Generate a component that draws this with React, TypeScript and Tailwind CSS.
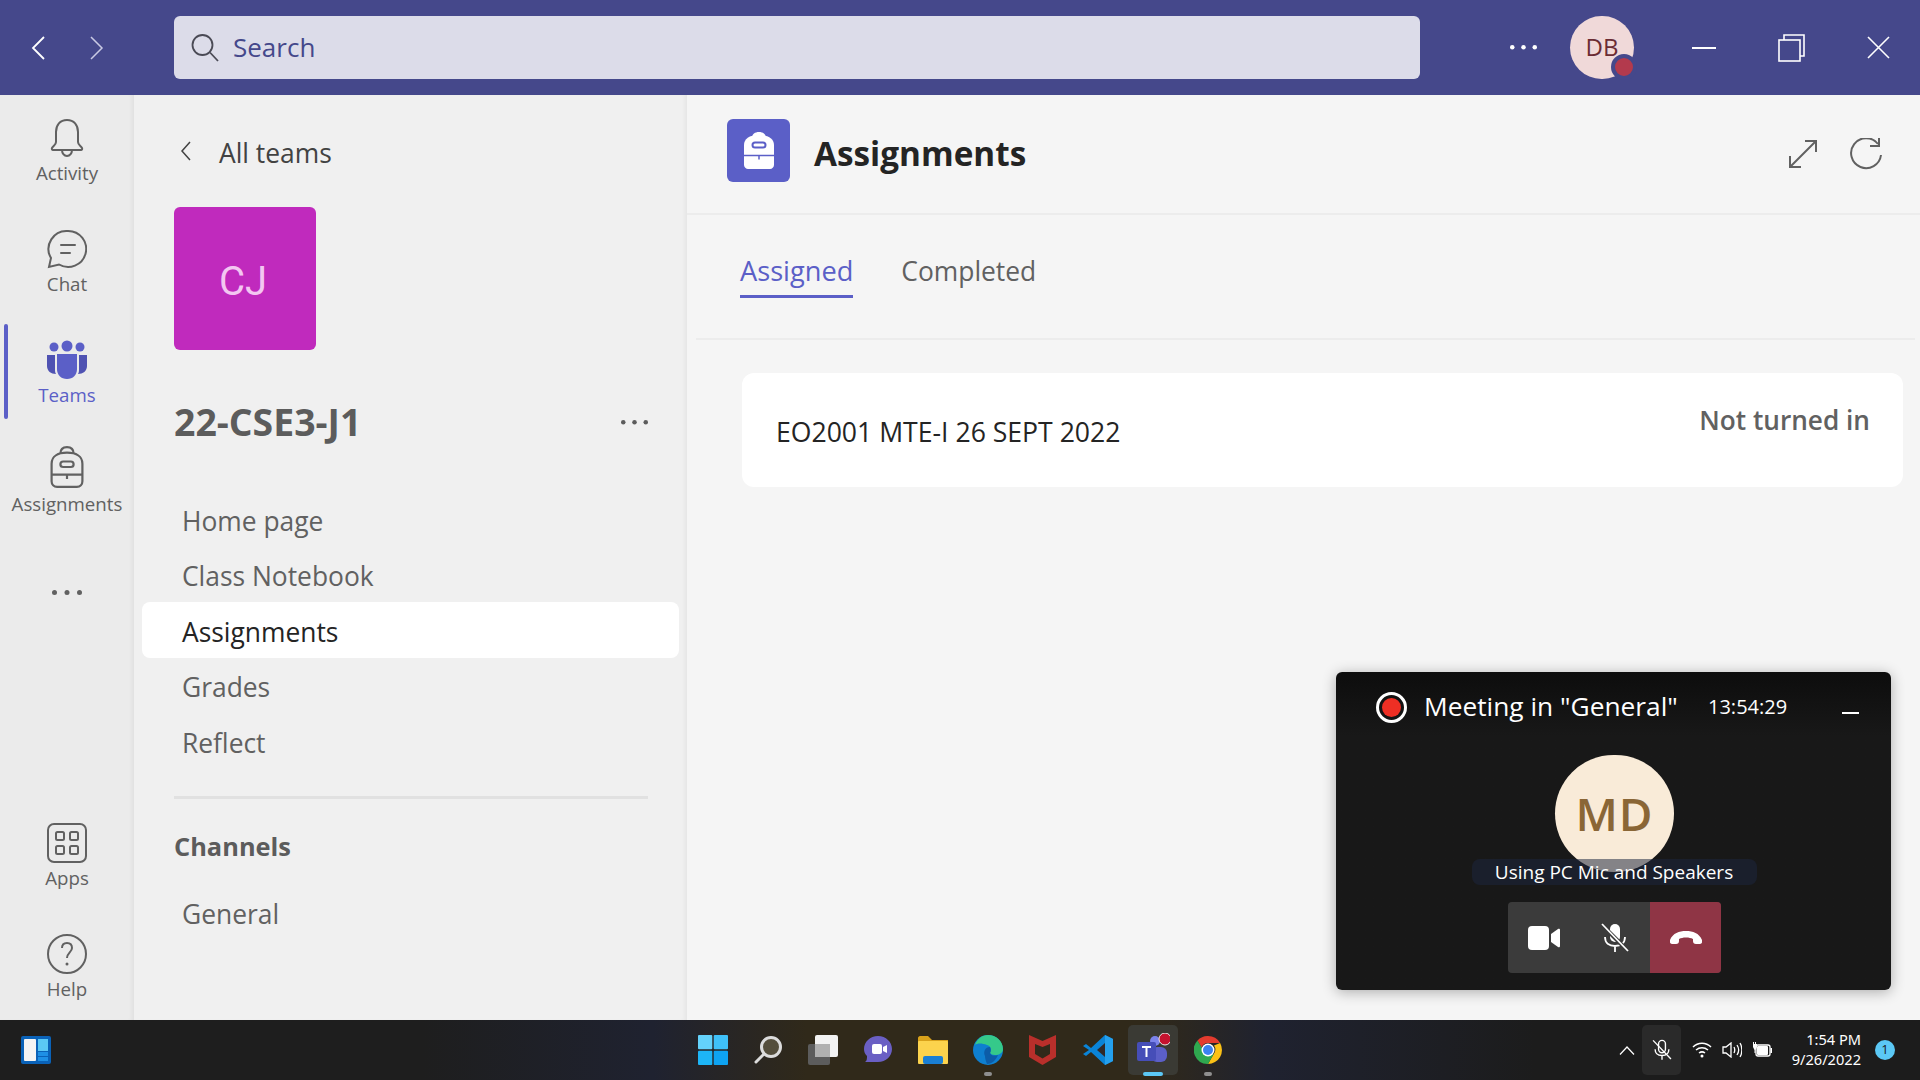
import { ReactNode } from "react";

const font = { fontFamily: '"Open Sans", "Noto Sans", sans-serif' };

const BellIcon = () => (
  <svg width="40" height="40" viewBox="0 0 40 40" fill="none" stroke="#616161" strokeWidth="2">
    <path d="M20 2c-7 0-11 5-11 12v10c0 3-3 4-4 6-.5 1 0 2 1 2h28c1 0 1.500-1 1-2-1-2-4-3-4-6V14c0-7-4-12-11-12z" />
    <path d="M15 32c0 3 2 6 5 6s5-3 5-6" />
  </svg>
);

const ChatIcon = () => (
  <svg width="40" height="40" viewBox="0 0 40 40" fill="none" stroke="#616161" strokeWidth="2">
    <path d="M21 2a18 18 0 1 1-9 33.500L2 38l2-9A18 18 0 0 1 21 2z" />
    <path d="M14 16h14M14 24h9" strokeLinecap="round" />
  </svg>
);

const TeamsIcon = () => (
  <svg width="40" height="40" viewBox="0 0 40 40" fill="#5b5fc7">
    <circle cx="7" cy="7" r="4.500" />
    <circle cx="20" cy="6" r="5.500" />
    <circle cx="33" cy="7" r="4.500" />
    <path d="M0 15h8v15c0 2 .5 3 1 4-5 0-9-3-9-8z" fill="#4f52b2" />
    <path d="M40 15h-8v15c0 2-.5 3-1 4 5 0 9-3 9-8z" fill="#4f52b2" />
    <path d="M10 14h20v15c0 6-4 10-10 10s-10-4-10-10z" />
  </svg>
);

const BagIcon = () => (
  <svg className="mt-[-6px]" width="44" height="44" viewBox="0 0 40 40" fill="none" stroke="#616161" strokeWidth="2">
    <path d="M6 17c0-7 6-10 14-10s14 3 14 10v16c0 3-2 5-5 5H11c-3 0-5-2-5-5z" />
    <path d="M14 8c0-4 2-6 6-6s6 2 6 6" />
    <rect x="14" y="15" width="12" height="5" rx="2.500" />
    <path d="M6 27h28M20 27v4" />
  </svg>
);

const AppsIcon = () => (
  <svg width="40" height="40" viewBox="0 0 40 40" fill="none" stroke="#616161" strokeWidth="2">
    <rect x="1" y="1" width="38" height="38" rx="6" />
    <rect x="9" y="9" width="8" height="8" rx="1.500" />
    <rect x="23" y="9" width="8" height="8" rx="1.500" />
    <rect x="9" y="23" width="8" height="8" rx="1.500" />
    <rect x="23" y="23" width="8" height="8" rx="1.500" />
  </svg>
);

const HelpIcon = () => (
  <svg width="40" height="40" viewBox="0 0 40 40" fill="none" stroke="#616161" strokeWidth="2">
    <circle cx="20" cy="20" r="19" />
    <path d="M15 14c0-3 2-5 5-5s5 2 5 5c0 4-5 5-5 10" />
    <circle cx="20" cy="30" r="1.500" fill="#616161" stroke="none" />
  </svg>
);

const Dots = ({ color, size = 4 }: { color: string; size?: number }) => (
  <svg width={size * 6} height={size + 2} viewBox={`0 0 ${size * 6} ${size + 2}`} fill={color}>
    <circle cx={size / 2} cy={size / 2 + 1} r={size / 2} />
    <circle cx={size * 3} cy={size / 2 + 1} r={size / 2} />
    <circle cx={size * 5.5} cy={size / 2 + 1} r={size / 2} />
  </svg>
);

const RailItem = ({
  icon,
  label,
  active,
  tall = true,
}: {
  icon: ReactNode;
  label: string;
  active?: boolean;
  tall?: boolean;
}) => (
  <div className={`relative flex flex-col items-center pt-[5px] ${tall ? "h-[111px]" : "h-[89px]"}`}>
    {active && <div className="absolute left-[4px] top-[-11px] h-[95px] w-[4px] rounded-full bg-[#5b5fc7]" />}
    {icon}
    <span className={`mt-[4px] text-[18.7px] leading-[22px] ${active ? "text-[#5b5fc7]" : "text-[#616161]"}`}>{label}</span>
  </div>
);

const NavRow = ({ label, selected }: { label: string; selected?: boolean }) => (
  <div
    className={`ml-[-32px] flex h-[55.5px] w-[537px] items-center rounded-[8px] pl-[40px] pt-[6px] text-[26.4px] ${
      selected ? "bg-white text-[#242424]" : "text-[#616161]"
    }`}
  >
    {label}
  </div>
);

const MicOff = ({ size }: { size: number }) => (
  <svg width={size} height={size} viewBox="0 0 32 32" fill="none" stroke="white" strokeWidth="1.800">
    <rect x="11" y="2" width="10" height="18" rx="5" fill="white" stroke="none" />
    <path d="M6 15c0 6 4 9 10 9s10-3 10-9M16 24v6" />
    <path d="M3 3l26 26" stroke="#3b3b3b" strokeWidth="4" />
    <path d="M3 2l26 27" />
  </svg>
);

const MeetingWindow = () => (
  <div className="absolute left-[1336px] top-[672px] flex h-[318px] w-[555px] flex-col items-center rounded-[6px] bg-gradient-to-b from-[#0d0d0d] to-[#181818] to-[20%] shadow-[0_2px_14px_rgba(0,0,0,0.3)]">
    <div className="mt-[15px] flex h-[40px] w-full items-center pl-[40px] text-white">
      <div className="flex h-[31px] w-[31px] shrink-0 items-center justify-center rounded-full border-[3px] border-white">
        <div className="h-[19px] w-[19px] rounded-full bg-[#ee2f24]" />
      </div>
      <span className="ml-[17px] w-[284px] text-[26.3px] whitespace-nowrap">Meeting in "General"</span>
      <span className="w-[134px] text-[20px]">13:54:29</span>
      <div className="mt-[12px] h-[2px] w-[17px] bg-white" />
    </div>
    <div className="ml-[2px] mt-[28px] flex h-[117px] w-[119px] items-center justify-center rounded-full bg-[#f9ebd8] text-[46px] font-semibold tracking-[1px] text-[#8a6636]">
      MD
    </div>
    <div className="relative ml-[1px] mt-[-13px] flex h-[26px] w-[285px] items-center justify-center rounded-[8px] bg-[rgba(28,38,62,0.53)] pt-[1px] text-[19px] text-white">
      Using PC Mic and Speakers
    </div>
    <div className="ml-[2px] mt-[17px] flex h-[71px] w-[213px] overflow-hidden rounded-[4px] bg-[#3b3b3b]">
      <div className="flex w-[71px] items-center justify-center">
        <svg width="32" height="26" viewBox="0 0 32 26" fill="white">
          <rect x="0" y="1" width="21" height="24" rx="4" />
          <path d="M23 9l7-5c1-.7 2 0 2 1v16c0 1-1 1.700-2 1l-7-5z" />
        </svg>
      </div>
      <div className="flex w-[71px] items-center justify-center">
        <MicOff size={32} />
      </div>
      <div className="flex w-[71px] items-center justify-center bg-[#8f3545]">
        <svg width="32" height="16" viewBox="0 0 32 16" fill="white">
          <path d="M0 10C3 3 9 1 16 1s13 2 16 9c.5 2 0 4-2 4h-4c-2 0-3-1-3-3V9c-2-1-4-1.500-7-1.500S11 8 9 9v2c0 2-1 3-3 3H2c-2 0-2.500-2-2-4z" />
        </svg>
      </div>
    </div>
  </div>
);

const TaskCell = ({ children }: { children: ReactNode }) => (
  <div className="relative flex h-[50px] w-[55px] items-center justify-center">{children}</div>
);

const RunDot = () => <div className="absolute bottom-[-1px] h-[4px] w-[8px] rounded-full bg-[#8f8f8f]" />;

const Taskbar = () => (
  <div className="flex h-[60px] items-center bg-[linear-gradient(90deg,#1e1e1e_0%,#1e1e1e_22%,#1f2230_34%,#30291a_42%,#30291a_60%,#1f2230_66%,#1c1c1c_80%,#1c1c1c_100%)] pl-[21px]">
    {/* Widgets */}
    <svg width="30" height="28" viewBox="0 0 30 28">
      <rect width="30" height="28" rx="2" fill="#0a62b8" />
      <rect x="3" y="3" width="12" height="22" rx="1" fill="#f4f4f4" />
      <rect x="17" y="3" width="10" height="12" fill="#5bc8f5" />
      <rect x="17" y="16" width="10" height="4" fill="#1e90e6" />
      <rect x="17" y="21" width="10" height="4" fill="#1e90e6" />
    </svg>

    <div className="ml-[634px] flex items-center">
      <TaskCell>
        <svg width="30" height="30" viewBox="0 0 30 30">
          <rect width="14.300" height="14.300" rx="1" fill="#64d2fb" />
          <rect x="15.700" width="14.300" height="14.300" rx="1" fill="#3fc1f9" />
          <rect y="15.700" width="14.300" height="14.300" rx="1" fill="#1db5f7" />
          <rect x="15.700" y="15.700" width="14.300" height="14.300" rx="1" fill="#0ea3f2" />
        </svg>
      </TaskCell>
      <TaskCell>
        <svg width="30" height="30" viewBox="0 0 30 30" fill="none" stroke="#dcdcdc" strokeWidth="3">
          <circle cx="18" cy="12" r="9.500" fill="#544e3c" />
          <path d="M11 19l-8 8" strokeLinecap="round" />
        </svg>
      </TaskCell>
      <TaskCell>
        <svg width="30" height="30" viewBox="0 0 30 30">
          <rect y="9" width="22" height="21" rx="2" fill="#5c5c5c" />
          <rect x="7" y="0" width="23" height="22" rx="2" fill="#f2f2f2" />
          <rect x="7" y="9" width="15" height="13" fill="#b0b0b0" />
        </svg>
      </TaskCell>
      <TaskCell>
        <svg width="30" height="30" viewBox="0 0 30 30">
          <path d="M15 1c8 0 14 6 14 13s-6 13-14 13H2c2-1 2-4 2-6-2-2-3-4-3-7C1 7 7 1 15 1z" fill="#6a5fc4" />
          <rect x="9" y="9" width="10" height="10" rx="2" fill="white" />
          <path d="M20 12l4-2v8l-4-2z" fill="white" />
        </svg>
      </TaskCell>
      <TaskCell>
        <svg width="30" height="28" viewBox="0 0 30 28">
          <path d="M0 2c0-1 1-2 2-2h8l4 4h16v6H0z" fill="#d9a21b" />
          <rect y="5" width="30" height="23" rx="1" fill="#fcd34d" />
          <rect x="5" y="20" width="20" height="8" rx="2" fill="#1a7fd4" />
        </svg>
      </TaskCell>
      <TaskCell>
        <svg width="30" height="30" viewBox="0 0 30 30">
          <circle cx="15" cy="15" r="15" fill="#0e7fd0" />
          <path d="M2 10C4 4 9 0 15 0c8 0 15 6 15 14 0 4-4 6-8 6-3 0-5-1-5-3 2-2 1-6-3-7C9 8 4 8 2 10z" fill="#35c98a" />
          <path d="M12 21c-2-4 0-9 5-9 1 3 1 5 0 6 1 3 5 3 8 2-2 5-6 9-11 9-1-3-2-5-2-8z" fill="#0c5ca8" />
        </svg>
        <RunDot />
      </TaskCell>
      <TaskCell>
        <svg width="27" height="30" viewBox="0 0 27 30" fill="#b92f2b">
          <path d="M0 0l13.500 6L27 0v22l-13.500 8L0 22zM6 9v10l7.500 4.500L21 19V9l-7.500 3z" fillRule="evenodd" />
        </svg>
      </TaskCell>
      <TaskCell>
        <svg width="30" height="30" viewBox="0 0 30 30">
          <path d="M22 0l8 4v22l-8 4-14-13-5 4-3-2 6-4-6-4 3-2 5 4z" fill="#0a84d8" />
          <path d="M22 0l8 4v22l-8 4z" fill="#24a0ee" />
          <path d="M22 8l-8 7 8 7z" fill="#30292a" />
        </svg>
      </TaskCell>
      <TaskCell>
        <div className="absolute h-[50px] w-[50px] rounded-[5px] bg-[#3a3a34]" />
        <svg className="relative" width="34" height="34" viewBox="0 0 34 34">
          <circle cx="19" cy="8" r="5" fill="#7b83eb" />
          <rect x="15" y="14" width="16" height="15" rx="6" fill="#5b5fc7" />
          <rect x="1" y="9" width="19" height="19" rx="2" fill="#464eb8" />
          <path d="M6 13h9v2h-3.500v9h-2v-9H6z" fill="white" />
          <circle cx="29" cy="6" r="6" fill="#c4122f" stroke="#e8e8e8" strokeWidth="1" />
        </svg>
        <div className="absolute bottom-[-1px] h-[4px] w-[20px] rounded-full bg-[#5bc8f5]" />
      </TaskCell>
      <TaskCell>
        <svg width="28" height="28" viewBox="0 0 28 28">
          <path d="M14 0a14 14 0 0 1 12.100 7H14a7 7 0 0 0-6.500 4.500L3.500 4.500A14 14 0 0 1 14 0z" fill="#e33b2e" />
          <path d="M26.100 7A14 14 0 0 1 14 28l6-10.500A7 7 0 0 0 20 9.500z" fill="#fbc116" />
          <path d="M3.500 4.500l6.500 11a7 7 0 0 0 10 2L14 28A14 14 0 0 1 3.500 4.500z" fill="#2fa84f" />
          <circle cx="14" cy="14" r="6.500" fill="white" />
          <circle cx="14" cy="14" r="5" fill="#3b82f0" />
        </svg>
        <RunDot />
      </TaskCell>
    </div>

    {/* Tray */}
    <div className="ml-auto flex items-center pr-[25px] text-white">
      <div className="flex w-[30px] justify-center">
        <svg width="16" height="9" viewBox="0 0 16 9" fill="none" stroke="white" strokeWidth="1.200">
          <path d="M1 8.500L8 1l7 7.500" />
        </svg>
      </div>
      <div className="flex h-[50px] w-[39px] items-center justify-center rounded-[5px] bg-[#2a2a2a]">
        <svg width="22" height="24" viewBox="0 0 32 32" fill="none" stroke="white" strokeWidth="2">
          <rect x="11" y="2" width="10" height="18" rx="5" />
          <path d="M6 15c0 6 4 9 10 9s10-3 10-9M16 24v6" />
          <path d="M3 2l26 27" />
        </svg>
      </div>
      <div className="ml-[6px] flex w-[30px] justify-center">
        <svg width="20" height="16" viewBox="0 0 20 16" fill="none" stroke="white" strokeWidth="1.500">
          <path d="M1 5c5-5 13-5 18 0M4 8c3.500-3 8.500-3 12 0M7 11c2-1.500 4-1.500 6 0" />
          <circle cx="10" cy="14" r="1.500" fill="white" stroke="none" />
        </svg>
      </div>
      <div className="flex w-[30px] justify-center">
        <svg width="20" height="16" viewBox="0 0 20 16" fill="none" stroke="white" strokeWidth="1.300">
          <path d="M1 5h3l5-4v14l-5-4H1z" />
          <path d="M12 5c1 2 1 4 0 6M15 3c2 3 2 7 0 10M18 1c2.500 4 2.500 10 0 14" />
        </svg>
      </div>
      <div className="flex w-[30px] justify-center">
        <svg width="20" height="16" viewBox="0 0 20 16" fill="white">
          <rect x="4" y="3" width="14" height="11" rx="2" fill="none" stroke="white" strokeWidth="1.300" />
          <rect x="5" y="4" width="11" height="9" rx="1" />
          <rect x="18.500" y="6" width="1.500" height="5" />
          <path d="M1 0h1v2h1V0h1v2h1v3L3.500 8v3h-1V8L1 5V2z" />
        </svg>
      </div>
      <div className="mb-[2px] w-[84px] text-right text-[14.6px] leading-[20px]" style={{ fontFamily: '"Noto Sans", sans-serif' }}>
        <div>1:54 PM</div>
        <div>9/26/2022</div>
      </div>
      <div className="ml-[14px] flex h-[20px] w-[20px] items-center justify-center rounded-full bg-[#5bc8f5] text-[13px] text-[#1a1a1a]">
        1
      </div>
    </div>
  </div>
);

export default function App() {
  return (
    <div className="relative flex h-[1080px] w-[1920px] flex-col overflow-hidden bg-[#f5f5f5]" style={font}>
      {/* Title bar */}
      <div className="flex h-[95px] shrink-0 items-center bg-[#45488b] pl-[30px]">
        <svg width="18" height="24" viewBox="0 0 18 24" fill="none" stroke="white" strokeWidth="1.800">
          <path d="M14 1L3 12l11 11" />
        </svg>
        <svg className="ml-[39px]" width="18" height="24" viewBox="0 0 18 24" fill="none" stroke="#c9cae4" strokeWidth="1.500">
          <path d="M4 1l11 11L4 23" />
        </svg>
        <div className="ml-[69px] flex h-[63px] w-[1246px] items-center rounded-[6px] bg-[#dcdce9] pl-[17px]">
          <svg width="28" height="28" viewBox="0 0 28 28" fill="none" stroke="#4a4a55" strokeWidth="1.800">
            <circle cx="11.500" cy="11" r="10" />
            <path d="M19 18.500l8 8.500" />
          </svg>
          <span className="ml-[14px] text-[26px] text-[#45488b]">Search</span>
        </div>
        <div className="ml-[90px]">
          <Dots color="white" size={4.5} />
        </div>
        <div className="relative ml-[33px] flex h-[63px] w-[64px] items-center justify-center rounded-full bg-[#f0d9d9] pb-[2px] text-[24px] text-[#6b2c34]">
          DB
          <div className="absolute bottom-[-1px] right-[-3px] h-[26px] w-[26px] rounded-full border-[4px] border-[#45488b] bg-[#b33a4d]" />
        </div>
        <div className="ml-[58px] h-[2px] w-[24px] bg-white" />
        <svg className="ml-[62px]" width="27" height="28" viewBox="0 0 27 28" fill="none" stroke="white" strokeWidth="1.600">
          <rect x="1" y="6" width="21" height="21" />
          <path d="M6 6V1h20v21h-4" />
        </svg>
        <svg className="ml-[62px]" width="23" height="23" viewBox="0 0 23 23" fill="none" stroke="white" strokeWidth="1.600">
          <path d="M1 1l21 21M22 1L1 22" />
        </svg>
      </div>

      <div className="flex min-h-0 flex-1">
        {/* App rail */}
        <div className="flex w-[134px] shrink-0 flex-col bg-[#ebebeb] pt-[18px] shadow-[inset_-4px_0_4px_-2px_rgba(0,0,0,0.05)]">
          <RailItem icon={<BellIcon />} label="Activity" />
          <RailItem icon={<ChatIcon />} label="Chat" />
          <RailItem icon={<TeamsIcon />} label="Teams" active />
          <RailItem icon={<BagIcon />} label="Assignments" />
          <div className="mt-[32px] flex justify-center">
            <Dots color="#616161" size={5} />
          </div>
          <div className="mb-[2px] mt-auto">
            <RailItem icon={<AppsIcon />} label="Apps" />
            <RailItem icon={<HelpIcon />} label="Help" tall={false} />
          </div>
        </div>

        {/* Team panel */}
        <div className="w-[553px] shrink-0 bg-[#f0f0f0] pl-[40px] pt-[38px] shadow-[inset_-4px_0_4px_-2px_rgba(0,0,0,0.05)]">
          <div className="flex h-[40px] items-center text-[26.4px] text-[#424242]">
            <svg className="mb-[4px] ml-[6px]" width="12" height="20" viewBox="0 0 12 20" fill="none" stroke="#424242" strokeWidth="1.500">
              <path d="M10 1L2 10l8 9" />
            </svg>
            <span className="ml-[27px] pt-[2px]">All teams</span>
          </div>
          <div
            className="mt-[34px] flex h-[143px] w-[142px] items-center justify-center rounded-[6px] bg-[#c02abd] pr-[4px] pt-[6px] text-[40px] text-[#f3c6f1]"
            style={{ fontFamily: "Roboto, sans-serif" }}
          >
            CJ
          </div>
          <div className="mt-[47px] flex h-[50px] w-[474px] items-center justify-between">
            <span className="text-[37.4px] font-bold text-[#5c5c5c]">22-CSE3-J1</span>
            <Dots color="#5c5c5c" size={4.5} />
          </div>
          <div className="mt-[44px]">
            <NavRow label="Home page" />
            <NavRow label="Class Notebook" />
            <NavRow label="Assignments" selected />
            <NavRow label="Grades" />
            <NavRow label="Reflect" />
          </div>
          <div className="mt-[27px] h-[3px] w-[474px] bg-[#e1e1e1]" />
          <div className="mt-[28px] flex h-[40px] items-center text-[25.4px] font-bold text-[#5c5c5c]">Channels</div>
          <div className="mt-[18px]">
            <NavRow label="General" />
          </div>
        </div>

        {/* Main */}
        <div className="flex min-w-0 flex-1 flex-col">
          <div className="flex h-[120px] shrink-0 items-center border-b-2 border-[#ececec] pl-[40px]">
            <div className="mb-[8px] flex h-[63px] w-[63px] items-center justify-center rounded-[6px] bg-[#5b5fc7]">
              <svg width="36" height="40" viewBox="0 0 36 40">
                <path d="M3 15c0-6 5-10 15-10s15 4 15 10v20c0 2-2 4-4 4H7c-2 0-4-2-4-4z" fill="white" />
                <path d="M11 8c0-4 3-6 7-6s7 2 7 6z" fill="white" />
                <rect x="11.500" y="12.500" width="13" height="5" rx="2.500" fill="white" stroke="#5b5fc7" strokeWidth="2" />
                <path d="M3 25.500h30M18 25.500v4" stroke="#5b5fc7" strokeWidth="1.500" />
              </svg>
            </div>
            <span className="ml-[24px] text-[33.3px] font-bold text-[#242424]">Assignments</span>
            <svg className="ml-auto" width="30" height="30" viewBox="0 0 30 30" fill="none" stroke="#616161" strokeWidth="2">
              <path d="M2 28L28 2M17 2h11v11M2 17v11h11" />
            </svg>
            <svg className="ml-[32px] mr-[37px]" width="33" height="33" viewBox="0 0 33 33" fill="none" stroke="#616161" strokeWidth="2">
              <path d="M28 6A15 15 0 1 0 31 17" />
              <path d="M29 0v8h-9" />
            </svg>
          </div>

          <div className="ml-[9px] mr-[5px] flex h-[125px] shrink-0 gap-[48px] border-b-2 border-[#ececec] pl-[44px] pt-[36px]">
            <div className="h-[47px] border-b-[3px] border-[#5b5fc7] text-[27.2px] font-medium leading-[40px] text-[#5b5fc7]">Assigned</div>
            <div className="text-[26.4px] leading-[40px] text-[#616161]">Completed</div>
          </div>

          <div className="ml-[55px] mt-[33px] flex h-[114px] w-[1161px] items-start justify-between rounded-[12px] bg-white pl-[34px] pr-[33px]">
            <span className="pt-[39px] text-[26.6px] leading-[40px] text-[#242424]">EO2001 MTE-I 26 SEPT 2022</span>
            <span className="pt-[27px] text-[26.2px] font-semibold leading-[40px] text-[#616161]">Not turned in</span>
          </div>
        </div>
      </div>

      <Taskbar />
      <MeetingWindow />
    </div>
  );
}
